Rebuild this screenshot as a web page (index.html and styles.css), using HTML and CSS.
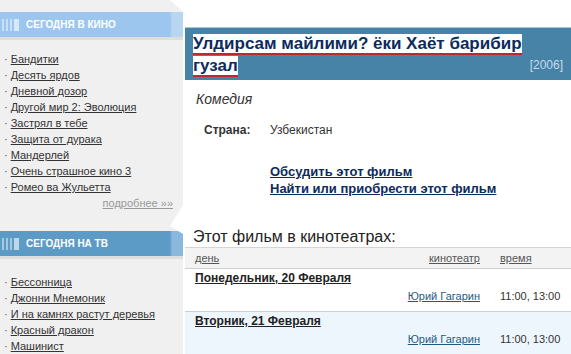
FILE: index.html
```html
<!DOCTYPE html>
<html lang="ru">

<head>
    <meta charset="UTF-8">
    <meta name="viewport" content="width=device-width, initial-scale=1.0">
    <link rel="stylesheet" href="styles.css">
    <title>Улдирсам майлими? ёки Хаёт барибир гузал</title>
</head>

<body>
    <div class="page">
        <div class="sidebar">
            <div class="side-block first">
                <div class="side-head light"><span class="bars"><i></i><i></i><i></i><i class="wide"></i></span>Сегодня в кино</div>
                <ul class="side-list">
                    <li><a href="#">Бандитки</a></li>
                    <li><a href="#">Десять ярдов</a></li>
                    <li><a href="#">Дневной дозор</a></li>
                    <li><a href="#">Другой мир 2: Эволюция</a></li>
                    <li><a href="#">Застрял в тебе</a></li>
                    <li><a href="#">Защита от дурака</a></li>
                    <li><a href="#">Мандерлей</a></li>
                    <li><a href="#">Очень страшное кино 3</a></li>
                    <li><a href="#">Ромео ва Жульетта</a></li>
                </ul>
                <div class="more"><a href="#">подробнее »»</a></div>
            </div>
            <div class="side-block second">
                <div class="side-head dark"><span class="bars"><i></i><i></i><i></i><i class="wide"></i></span>Сегодня на ТВ</div>
                <ul class="side-list">
                    <li><a href="#">Бессонница</a></li>
                    <li><a href="#">Джонни Мнемоник</a></li>
                    <li><a href="#">И на камнях растут деревья</a></li>
                    <li><a href="#">Красный дракон</a></li>
                    <li><a href="#">Машинист</a></li>
                </ul>
            </div>
        </div>

        <div class="main">
            <div class="title-bar">
                <h1 class="film-title"><span>Улдирсам майлими? ёки Хаёт барибир гузал</span></h1>
                <div class="year">[2006]</div>
            </div>

            <div class="genre">Комедия</div>

            <table class="info">
                <tr>
                    <th>Страна:</th>
                    <td>Узбекистан</td>
                </tr>
            </table>

            <div class="actions">
                <a href="#">Обсудить этот фильм</a>
                <a href="#">Найти или приобрести этот фильм</a>
            </div>

            <h2 class="cinemas-title">Этот фильм в кинотеатрах:</h2>

            <table class="schedule">
                <thead>
                    <tr>
                        <th class="day"><a href="#">день</a></th>
                        <th class="hall"><a href="#">кинотеатр</a></th>
                        <th class="time"><a href="#">время</a></th>
                    </tr>
                </thead>
                <tbody>
                    <tr class="date-row">
                        <td colspan="3"><a href="#">Понедельник, 20 Февраля</a></td>
                    </tr>
                    <tr class="show-row">
                        <td></td>
                        <td class="hall"><a href="#">Юрий Гагарин</a></td>
                        <td class="time">11:00, 13:00</td>
                    </tr>
                    <tr class="date-row alt">
                        <td colspan="3"><a href="#">Вторник, 21 Февраля</a></td>
                    </tr>
                    <tr class="show-row alt">
                        <td></td>
                        <td class="hall"><a href="#">Юрий Гагарин</a></td>
                        <td class="time">11:00, 13:00</td>
                    </tr>
                </tbody>
            </table>
        </div>
    </div>
</body>

</html>
```

FILE: styles.css
```css
body {
    margin: 0;
    background-color: #fff;
    font-family: 'Liberation Sans', Arial, sans-serif;
    font-size: 11px;
    color: #333;
}

.page {
    display: flex;
    align-items: flex-start;
}

/* left column */
.sidebar {
    width: 183px;
    flex-shrink: 0;
}

.side-block {
    background-color: #f0f0f0;
}

.side-block.first {
    height: 226px;
    padding-top: 12px;
    box-sizing: border-box;
    clip-path: polygon(0 0, 170px 0, 183px 12px, 183px 205px, 170px 226px, 0 226px);
}

.side-block.first .side-list {
    padding-top: 11px;
}

.side-block.second {
    height: 128px;
    padding-top: 5px;
    box-sizing: border-box;
    clip-path: polygon(0 0, 170px 0, 183px 8px, 183px 100%, 0 100%);
}

.side-block.second .side-list {
    padding-top: 15px;
}

.side-head {
    display: flex;
    align-items: center;
    height: 25px;
    color: #fff;
    font-weight: bold;
    font-size: 10px;
    text-transform: uppercase;
    border-bottom: 3px solid #dedede;
}

.side-head.light {
    background: linear-gradient(to right, #9cc6ee 0, #9cc6ee 170px, #b8d6f2 172px, #b8d6f2 183px);
}

.side-head.dark {
    background: linear-gradient(to right, #5b9bc6 0, #5b9bc6 170px, #8ab8dc 172px, #8ab8dc 183px);
}

.bars {
    display: flex;
    gap: 2px;
    margin: 0 7px 0 2px;
}

.bars i {
    display: block;
    width: 2px;
    height: 12px;
    background-color: rgba(255, 255, 255, 0.45);
}

.bars i.wide {
    width: 5px;
    background-color: rgba(255, 255, 255, 0.6);
}

.side-list {
    list-style: none;
    margin: 0;
    padding: 0 0 0 4px;
}

.side-list li {
    line-height: 16px;
}

.side-list li::before {
    content: "·";
    margin-right: 3px;
    color: #555;
}

.side-list a {
    color: #333;
}

.more {
    text-align: right;
    padding-right: 10px;
    line-height: 16px;
}

.more a {
    color: #999;
}

/* main column */
.main {
    flex: 1;
    margin-left: 2px;
}

.title-bar {
    margin-top: 27px;
    background-color: #4782a7;
    padding: 5px 8px 3px 8px;
    position: relative;
    border-top: 1px solid #a9c7dd;
}

.film-title {
    margin: 0;
    font-size: 17px;
    line-height: 22px;
    font-weight: bold;
    color: #0d2b5c;
    width: 345px;
}

.film-title span {
    background-color: #fff;
    border-bottom: 2px solid #c9242b;
}

.year {
    position: absolute;
    right: 8px;
    bottom: 8px;
    color: #c6dcee;
    font-size: 12px;
}

.genre {
    margin: 11px 0 0 11px;
    font-size: 14px;
    font-style: italic;
    color: #333;
}

.info {
    margin: 16px 0 0 19px;
    border-collapse: collapse;
}

.info th {
    text-align: left;
    width: 66px;
    padding: 0;
    font-size: 12px;
    color: #333;
}

.info td {
    padding: 0;
    font-size: 12px;
}

.actions {
    display: flex;
    flex-direction: column;
    margin: 26px 0 0 85px;
    line-height: 17px;
}

.actions a {
    color: #0d2b5c;
    font-weight: bold;
    font-size: 13px;
}

.cinemas-title {
    margin: 31px 0 0 8px;
    font-size: 16px;
    font-weight: normal;
    color: #222;
    line-height: 18px;
}

.schedule {
    width: 100%;
    border-collapse: collapse;
    margin-top: 1px;
}

.schedule thead th {
    background-color: #f3f3f3;
    border-top: 1px solid #d5d5d5;
    border-bottom: 1px solid #d0d0d0;
    font-weight: normal;
    font-size: 11px;
    height: 20px;
    padding: 0;
}

.schedule thead a {
    color: #555;
}

.schedule th.day {
    text-align: left;
    padding-left: 10px;
}

.schedule .hall {
    text-align: right;
    padding-right: 20px;
    width: 120px;
}

.schedule .time {
    text-align: left;
    width: 71px;
}

.date-row td {
    padding: 2px 0 0 10px;
    height: 18px;
    line-height: 14px;
    vertical-align: top;
}

.date-row a {
    font-weight: bold;
    font-size: 12px;
    color: #222;
}

.show-row td {
    height: 22px;
    padding: 0;
    line-height: 14px;
    vertical-align: top;
    border-bottom: 1px solid #d0d0d0;
}

.show-row .hall a {
    color: #1d5b85;
}

.show-row .time {
    color: #333;
}

.alt td {
    background-color: #eef6fd;
}
```
